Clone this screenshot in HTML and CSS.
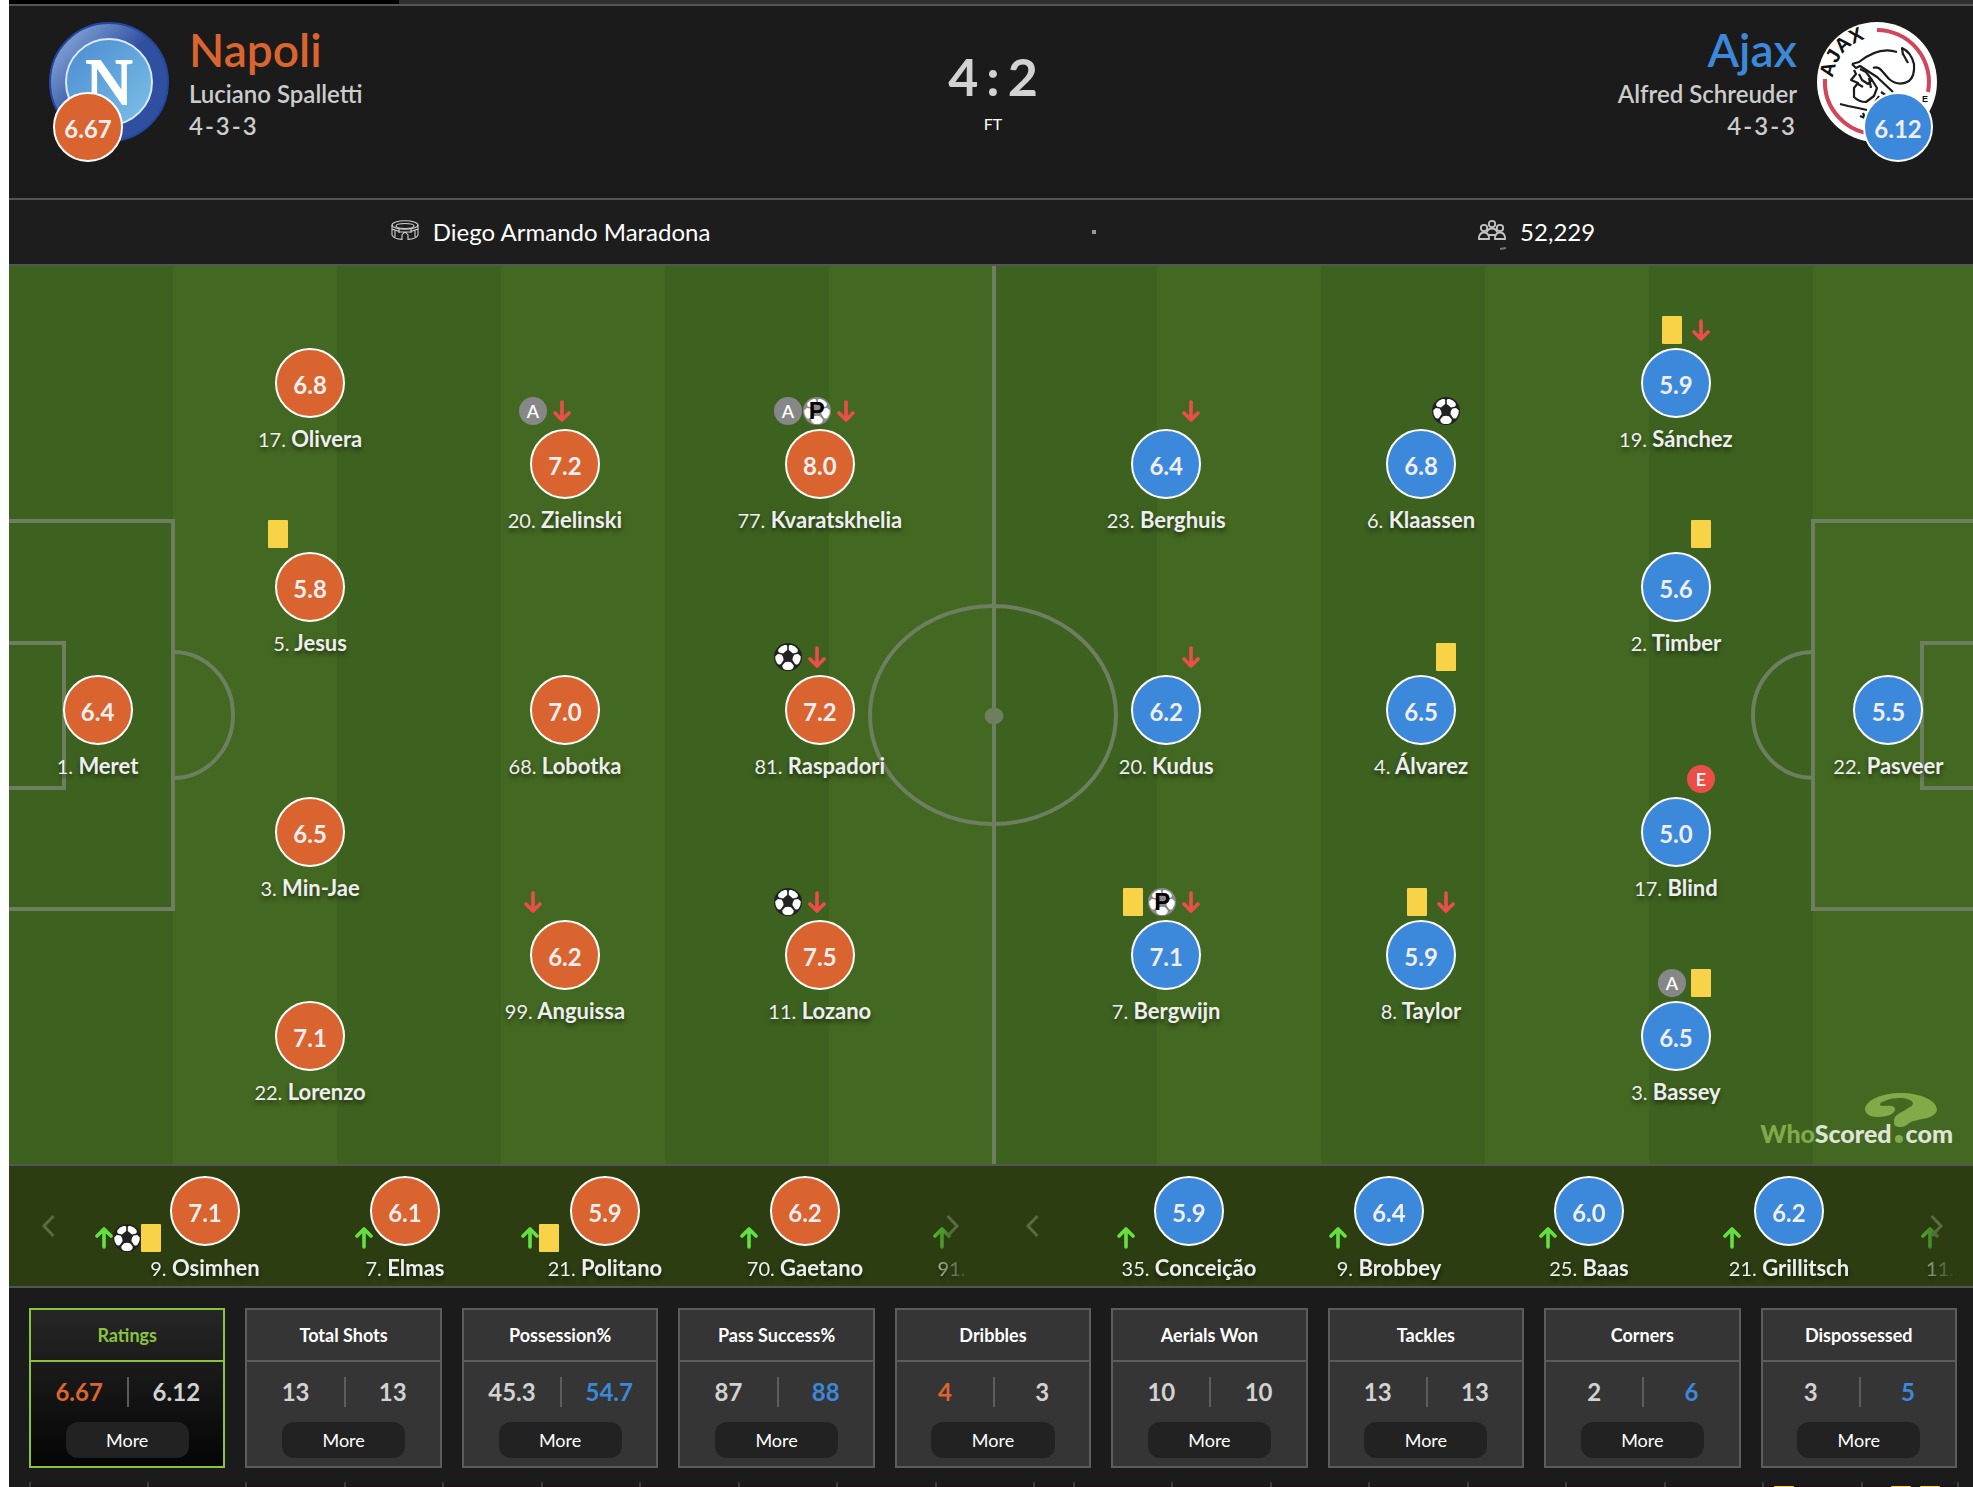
FILE: index.html
```html
<!DOCTYPE html>
<html lang="en">
<head>
    <meta charset="utf-8">
    <title>Napoli 4 : 2 Ajax</title>
    <link rel="stylesheet" href="styles.css">
</head>
<body>
    <!-- Shared icons -->
    <svg class="defs" width="0" height="0" aria-hidden="true">
        <symbol id="arrow" viewBox="0 0 18 22">
            <path d="M9 2V19M2 13L9 20L16 13" fill="none" stroke="currentColor" stroke-width="3.6" stroke-linecap="round" stroke-linejoin="round"/>
        </symbol>
        <symbol id="ball" viewBox="0 0 28 28">
            <circle cx="14" cy="14" r="14" fill="currentColor"/>
            <g fill="#fff">
                <path d="M4.500 6Q7 3 10.500 2Q13 1.500 13.200 3V7L9 10.500L5 9.500Q3.500 8 4.500 6Z"/>
                <path d="M23.500 6Q21 3 17.500 2Q15 1.500 14.800 3V7L19 10.500L23 9.500Q24.500 8 23.500 6Z"/>
                <path d="M3.800 11L7.500 11.500Q9.500 13.500 9.600 17L7 21Q4.500 22.500 3 20Q1 17 1.200 13.500Z"/>
                <path d="M24.200 11L20.500 11.500Q18.500 13.500 18.400 17L21 21Q23.500 22.500 25 20Q27 17 26.800 13.500Z"/>
                <path d="M11 19.200Q14 18.500 17 19.200L19.800 22.500Q20 25 17.500 26.500Q14 27.600 10.500 26.500Q8 25 8.200 22.500Z"/>
            </g>
        </symbol>
        <symbol id="chevron" viewBox="0 0 15 24">
            <path d="M12.500 2L3 12L12.500 22" fill="none" stroke="currentColor" stroke-width="3"/>
        </symbol>
    </svg>

    <main class="match">
        <div class="tabs"><div class="tab-active"></div></div>

        <!-- Score header -->
        <header class="header">
            <div class="team">
                <div class="crest">
                    <svg viewBox="0 0 120 120">
                        <defs>
                            <linearGradient id="shine" x1="0.1" y1="0.15" x2="0.5" y2="0.5">
                                <stop offset="0" stop-color="#7fa0d4"/>
                                <stop offset="1" stop-color="#2f4fa0"/>
                            </linearGradient>
                            <linearGradient id="sky" x1="0" y1="0" x2="1" y2="1">
                                <stop offset="0" stop-color="#4a8ad0"/>
                                <stop offset="1" stop-color="#7cc2e8"/>
                            </linearGradient>
                        </defs>
                        <circle cx="60" cy="60" r="59" fill="url(#shine)" stroke="#2746a0" stroke-width="2"/>
                        <circle cx="60" cy="60" r="43" fill="url(#sky)" stroke="#dce9fa" stroke-width="2"/>
                        <text x="60" y="82" text-anchor="middle" font-size="66" class="crest-n">N</text>
                    </svg>
                    <span class="rating home crest-rating">6.67</span>
                </div>
                <div class="team-info">
                    <h1 class="team-name home-text">Napoli</h1>
                    <p class="manager">Luciano Spalletti</p>
                    <p class="formation">4-3-3</p>
                </div>
            </div>
            <div class="result">
                <div class="score"><span>4</span><span>:</span><span>2</span></div>
                <div class="status">FT</div>
            </div>
            <div class="team team-right">
                <div class="crest">
                    <svg viewBox="0 0 120 120">
                        <circle cx="60" cy="60" r="60" fill="#fff"/>
                        <g fill="none" stroke="#d2455a" stroke-width="4">
                            <path d="M60 8A52 52 0 0 1 111 70"/>
                            <path d="M8 57A52 52 0 0 0 60 112"/>
                        </g>
                        <path id="ajaxArc" d="M16 56A44 44 0 0 1 74 18" fill="none"/>
                        <text class="crest-ajax" font-size="20"><textPath href="#ajaxArc">AJAX</textPath></text>
                        <g fill="none" stroke="#1b1b1b" stroke-width="2.200" stroke-linejoin="round">
                            <path d="M35 42L42 40Q62 24 80 30"/>
                            <path d="M35 42L39 46L43 44L60 55L76 70"/>
                            <path d="M86 33L85 26Q94 30 97 42Q98 54 92 59Q82 65 72 57L65 49Q61 44 56 46"/>
                            <path d="M86 32L91 41"/>
                            <path d="M37 48L39 52L34 58L41 61L37 66L37 75Q42 80 49 80L57 74L60 66L55 58L49 50L43 47"/>
                            <path d="M42 52L45 58L51 62L55 58M41 62L46 65M52 56L54 66"/>
                            <path d="M23 82L31 84L41 86L50 88M43 94L48 96L46 91M58 80L62 74M64 70L70 74"/>
                        </g>
                        <text x="105" y="80" font-size="9" class="crest-ajax">E</text>
                    </svg>
                    <span class="rating away crest-rating">6.12</span>
                </div>
                <div class="team-info">
                    <h1 class="team-name away-text">Ajax</h1>
                    <p class="manager">Alfred Schreuder</p>
                    <p class="formation">4-3-3</p>
                </div>
            </div>
        </header>

        <!-- Venue and attendance -->
        <div class="venue">
            <div class="venue-item">
                <svg class="venue-icon" viewBox="0 0 28 20" fill="none" stroke="#cfcfcf" stroke-width="1.100">
                    <ellipse cx="14" cy="5" rx="13" ry="4.300"/>
                    <ellipse cx="14" cy="6" rx="9" ry="2.500"/>
                    <path d="M1 5V15Q3 19 11 19.400V15Q14 10 17 15V19.400Q25 19 27 15V5M1 9Q14 15 27 9M4 10V17M8 8V13M20 8V13M24 10V17"/>
                </svg>
                <span>Diego Armando Maradona</span>
            </div>
            <i class="dot"></i>
            <div class="venue-item">
                <svg class="venue-icon" viewBox="0 0 28 20" fill="none" stroke="#c4c4c4" stroke-width="1.800">
                    <ellipse cx="14" cy="4" rx="3.200" ry="3.200"/>
                    <circle cx="6" cy="8" r="3.200"/>
                    <circle cx="22" cy="8" r="3.200"/>
                    <path d="M1 19V17Q2 12.500 6 12.500Q10 12.500 11 17V19ZM17 19V17Q18 12.500 22 12.500Q26 12.500 27 17V19ZM9 12Q10 8.500 14 8.500Q18 8.500 19 12M11 15H17"/>
                    <path d="M22 29L28 28" stroke="#777"/>
                </svg>
                <span>52,229</span>
            </div>
        </div>

        <!-- Pitch -->
        <section class="pitch">
            <svg class="lines" viewBox="0 0 1968 898" preserveAspectRatio="none" fill="none" stroke="#6e7e60" stroke-width="4">
                <path d="M0 255H164V643H0M0 377H55V522H0"/>
                <path d="M164 386A60 63 0 0 1 164 512"/>
                <path d="M1968 255H1804V643H1968M1968 377H1913V522H1968"/>
                <path d="M1804 386A60 63 0 0 0 1804 512"/>
                <path d="M985 0V898"/>
                <ellipse cx="984" cy="449" rx="123" ry="109"/>
                <ellipse cx="985" cy="450" rx="9" ry="8" fill="#6e7e60" stroke-width="1"/>
            </svg>

            <div class="side side-home">
                <div class="player col-1 row-4">
                    <span class="rating home">6.4</span>
                    <div class="name"><small>1.</small> Meret</div>
                </div>
                <div class="player col-2 row-1">
                    <span class="rating home">6.8</span>
                    <div class="name"><small>17.</small> Olivera</div>
                </div>
                <div class="player col-2 row-3">
                    <div class="events"><i class="event"><i class="yellow"></i></i></div>
                    <span class="rating home">5.8</span>
                    <div class="name"><small>5.</small> Jesus</div>
                </div>
                <div class="player col-2 row-5">
                    <span class="rating home">6.5</span>
                    <div class="name"><small>3.</small> Min-Jae</div>
                </div>
                <div class="player col-2 row-7">
                    <span class="rating home">7.1</span>
                    <div class="name"><small>22.</small> Lorenzo</div>
                </div>
                <div class="player col-3 row-2">
                    <div class="events">
                        <span class="event assist">A</span>
                        <i class="event"><svg class="off"><use href="#arrow"/></svg></i>
                    </div>
                    <span class="rating home">7.2</span>
                    <div class="name"><small>20.</small> Zielinski</div>
                </div>
                <div class="player col-3 row-4">
                    <span class="rating home">7.0</span>
                    <div class="name"><small>68.</small> Lobotka</div>
                </div>
                <div class="player col-3 row-6">
                    <div class="events"><i class="event"><svg class="off"><use href="#arrow"/></svg></i></div>
                    <span class="rating home">6.2</span>
                    <div class="name"><small>99.</small> Anguissa</div>
                </div>
                <div class="player col-4 row-2">
                    <div class="events">
                        <span class="event assist">A</span>
                        <span class="event penalty"><svg class="ball"><use href="#ball"/></svg><b>P</b></span>
                        <i class="event"><svg class="off"><use href="#arrow"/></svg></i>
                    </div>
                    <span class="rating home">8.0</span>
                    <div class="name"><small>77.</small> Kvaratskhelia</div>
                </div>
                <div class="player col-4 row-4">
                    <div class="events">
                        <i class="event"><svg class="ball"><use href="#ball"/></svg></i>
                        <i class="event"><svg class="off"><use href="#arrow"/></svg></i>
                    </div>
                    <span class="rating home">7.2</span>
                    <div class="name"><small>81.</small> Raspadori</div>
                </div>
                <div class="player col-4 row-6">
                    <div class="events">
                        <i class="event"><svg class="ball"><use href="#ball"/></svg></i>
                        <i class="event"><svg class="off"><use href="#arrow"/></svg></i>
                    </div>
                    <span class="rating home">7.5</span>
                    <div class="name"><small>11.</small> Lozano</div>
                </div>
            </div>

            <div class="side side-away">
                <div class="player col-4 row-2">
                    <div class="events"><i class="event"><svg class="off"><use href="#arrow"/></svg></i></div>
                    <span class="rating away">6.4</span>
                    <div class="name"><small>23.</small> Berghuis</div>
                </div>
                <div class="player col-4 row-4">
                    <div class="events"><i class="event"><svg class="off"><use href="#arrow"/></svg></i></div>
                    <span class="rating away">6.2</span>
                    <div class="name"><small>20.</small> Kudus</div>
                </div>
                <div class="player col-4 row-6">
                    <div class="events">
                        <i class="event"><i class="yellow"></i></i>
                        <span class="event penalty"><svg class="ball"><use href="#ball"/></svg><b>P</b></span>
                        <i class="event"><svg class="off"><use href="#arrow"/></svg></i>
                    </div>
                    <span class="rating away">7.1</span>
                    <div class="name"><small>7.</small> Bergwijn</div>
                </div>
                <div class="player col-3 row-2">
                    <div class="events"><i class="event"><svg class="ball"><use href="#ball"/></svg></i></div>
                    <span class="rating away">6.8</span>
                    <div class="name"><small>6.</small> Klaassen</div>
                </div>
                <div class="player col-3 row-4">
                    <div class="events"><i class="event"><i class="yellow"></i></i></div>
                    <span class="rating away">6.5</span>
                    <div class="name"><small>4.</small> Álvarez</div>
                </div>
                <div class="player col-3 row-6">
                    <div class="events">
                        <i class="event"><i class="yellow"></i></i>
                        <i class="event"><svg class="off"><use href="#arrow"/></svg></i>
                    </div>
                    <span class="rating away">5.9</span>
                    <div class="name"><small>8.</small> Taylor</div>
                </div>
                <div class="player col-2 row-1">
                    <div class="events">
                        <i class="event"><i class="yellow"></i></i>
                        <i class="event"><svg class="off"><use href="#arrow"/></svg></i>
                    </div>
                    <span class="rating away">5.9</span>
                    <div class="name"><small>19.</small> Sánchez</div>
                </div>
                <div class="player col-2 row-3">
                    <div class="events"><i class="event"><i class="yellow"></i></i></div>
                    <span class="rating away">5.6</span>
                    <div class="name"><small>2.</small> Timber</div>
                </div>
                <div class="player col-2 row-5">
                    <div class="events"><span class="event error">E</span></div>
                    <span class="rating away">5.0</span>
                    <div class="name"><small>17.</small> Blind</div>
                </div>
                <div class="player col-2 row-7">
                    <div class="events">
                        <span class="event assist">A</span>
                        <i class="event"><i class="yellow"></i></i>
                    </div>
                    <span class="rating away">6.5</span>
                    <div class="name"><small>3.</small> Bassey</div>
                </div>
                <div class="player col-1 row-4">
                    <span class="rating away">5.5</span>
                    <div class="name"><small>22.</small> Pasveer</div>
                </div>
            </div>

            <div class="logo">
                <svg class="logo-mark" viewBox="0 0 72 34">
                    <path d="M12 24C4 24 0 20 0 16C1 7 17 0 35 0C57 0 72 8 72 17C71 22 65 25 57 26L49 28C43 29 42 34 36 34C30 34 29 32 29 29C29 25 30 23 32 22C35 19 40 18 43 15C46 14 48 12 48 10C47 7 41 5 35 5C28 5 23 6 20 8C16 9 15 10 15 12C17 14 20 12 22 13C27 12 30 14 30 16C30 20 25 24 12 24Z" fill="#81ab49"/>
                </svg>
                <span class="logo-green">Who</span>Scored<i class="logo-dot"></i>com
            </div>
        </section>

        <!-- Substitutes -->
        <section class="subs">
            <div class="bench">
                <button class="arrow-btn prev" aria-label="Previous"><svg><use href="#chevron"/></svg></button>
                <div class="bench-list">
                    <div class="slot"><div class="sub">
                        <div class="events">
                            <svg class="on"><use href="#arrow"/></svg>
                            <svg class="ball"><use href="#ball"/></svg>
                            <i class="yellow"></i>
                        </div>
                        <span class="rating home">7.1</span>
                        <div class="name"><small>9.</small> Osimhen</div>
                    </div></div>
                    <div class="slot"><div class="sub">
                        <div class="events"><svg class="on"><use href="#arrow"/></svg></div>
                        <span class="rating home">6.1</span>
                        <div class="name"><small>7.</small> Elmas</div>
                    </div></div>
                    <div class="slot"><div class="sub">
                        <div class="events"><svg class="on"><use href="#arrow"/></svg><i class="yellow"></i></div>
                        <span class="rating home">5.9</span>
                        <div class="name"><small>21.</small> Politano</div>
                    </div></div>
                    <div class="slot"><div class="sub">
                        <div class="events"><svg class="on"><use href="#arrow"/></svg></div>
                        <span class="rating home">6.2</span>
                        <div class="name"><small>70.</small> Gaetano</div>
                    </div></div>
                    <div class="slot"><div class="sub">
                        <div class="events"><svg class="on"><use href="#arrow"/></svg></div>
                        <div class="rating-gap"></div>
                        <div class="name"><small>91.</small> Ndombélé</div>
                    </div></div>
                </div>
                <button class="arrow-btn next" aria-label="Next"><svg><use href="#chevron"/></svg></button>
            </div>
            <div class="bench">
                <button class="arrow-btn prev" aria-label="Previous"><svg><use href="#chevron"/></svg></button>
                <div class="bench-list">
                    <div class="slot"><div class="sub">
                        <div class="events"><svg class="on"><use href="#arrow"/></svg></div>
                        <span class="rating away">5.9</span>
                        <div class="name"><small>35.</small> Conceição</div>
                    </div></div>
                    <div class="slot"><div class="sub">
                        <div class="events"><svg class="on"><use href="#arrow"/></svg></div>
                        <span class="rating away">6.4</span>
                        <div class="name"><small>9.</small> Brobbey</div>
                    </div></div>
                    <div class="slot"><div class="sub">
                        <div class="events"><svg class="on"><use href="#arrow"/></svg></div>
                        <span class="rating away">6.0</span>
                        <div class="name"><small>25.</small> Baas</div>
                    </div></div>
                    <div class="slot"><div class="sub">
                        <div class="events"><svg class="on"><use href="#arrow"/></svg></div>
                        <span class="rating away">6.2</span>
                        <div class="name"><small>21.</small> Grillitsch</div>
                    </div></div>
                    <div class="slot"><div class="sub">
                        <div class="events"><svg class="on"><use href="#arrow"/></svg></div>
                        <div class="rating-gap"></div>
                        <div class="name"><small>11.</small> Ocampos</div>
                    </div></div>
                </div>
                <button class="arrow-btn next" aria-label="Next"><svg><use href="#chevron"/></svg></button>
            </div>
        </section>

        <!-- Match stats -->
        <section class="stats">
            <div class="stat active">
                <h2>Ratings</h2>
                <div class="values"><span class="home-text">6.67</span><span>6.12</span></div>
                <button class="more">More</button>
            </div>
            <div class="stat">
                <h2>Total Shots</h2>
                <div class="values"><span>13</span><span>13</span></div>
                <button class="more">More</button>
            </div>
            <div class="stat">
                <h2>Possession%</h2>
                <div class="values"><span>45.3</span><span class="away-text">54.7</span></div>
                <button class="more">More</button>
            </div>
            <div class="stat">
                <h2>Pass Success%</h2>
                <div class="values"><span>87</span><span class="away-text">88</span></div>
                <button class="more">More</button>
            </div>
            <div class="stat">
                <h2>Dribbles</h2>
                <div class="values"><span class="home-text">4</span><span>3</span></div>
                <button class="more">More</button>
            </div>
            <div class="stat">
                <h2>Aerials Won</h2>
                <div class="values"><span>10</span><span>10</span></div>
                <button class="more">More</button>
            </div>
            <div class="stat">
                <h2>Tackles</h2>
                <div class="values"><span>13</span><span>13</span></div>
                <button class="more">More</button>
            </div>
            <div class="stat">
                <h2>Corners</h2>
                <div class="values"><span>2</span><span class="away-text">6</span></div>
                <button class="more">More</button>
            </div>
            <div class="stat">
                <h2>Dispossessed</h2>
                <div class="values"><span>3</span><span class="away-text">5</span></div>
                <button class="more">More</button>
            </div>
        </section>

        <!-- Timeline -->
        <div class="timeline">
            <i></i><i></i><i></i><i></i><i></i><i></i><i></i><i></i><i></i><i></i>
            <i class="extra"></i>
            <i></i><i></i><i></i><i></i><i></i><i></i><i></i>
            <i><b class="yellow"></b></i>
            <i><b class="yellow"></b><b class="yellow"></b></i>
        </div>
    </main>
</body>
</html>
```
FILE: styles.css
```css
* {
    box-sizing: border-box;
}

body {
    margin: 0;
    height: 100vh;
    overflow: hidden;
    background: #fff;
    font-family: Lato, "Open Sans", sans-serif;
    color: #fff;
}

h1, h2, p {
    margin: 0;
}

.defs {
    position: absolute;
}

.match {
    margin-left: 9px;
    margin-right: -4px;
    background: #1b1b1b;
}

.home-text {
    color: #db6530;
}

.away-text {
    color: #3c88da;
}

.tabs {
    height: 6px;
    background: #2f2f2f;
    border-bottom: 2px solid #555;
}

.tab-active {
    width: 390px;
    height: 4px;
    background: #000;
}

/* header */
.header {
    display: grid;
    grid-template-columns: 1fr auto 1fr;
    height: 194px;
    padding: 16px 40px 0;
    border-bottom: 2px solid #555;
}

.team {
    display: flex;
    align-items: flex-start;
    gap: 20px;
}

.team-right {
    flex-direction: row-reverse;
    text-align: right;
}

.crest {
    position: relative;
    width: 120px;
    height: 120px;
}

.crest svg {
    display: block;
}

.crest-n {
    font-family: "Liberation Serif", serif;
    fill: #fff;
    stroke: #fff;
    stroke-width: 2px;
}

.crest-ajax {
    font-family: "Liberation Sans", sans-serif;
    font-weight: bold;
    fill: #111;
}

.crest-rating {
    position: absolute;
    top: 70px;
    left: 4px;
}

.team-right .crest-rating {
    left: auto;
    right: 4px;
}

.team-name {
    font-size: 46px;
    font-weight: 600;
    line-height: 56px;
}

.manager, .formation {
    font-size: 24px;
    font-weight: 600;
    line-height: 32px;
    color: #ccc;
}

.formation {
    letter-spacing: 2px;
}

.result {
    padding-top: 24px;
    text-align: center;
}

.score {
    display: flex;
    justify-content: center;
    gap: 8px;
    font-size: 52px;
    font-weight: 700;
    line-height: 60px;
    color: #d2d2d2;
}

.status {
    font-size: 16px;
    line-height: 36px;
}

/* venue */
.venue {
    display: flex;
    justify-content: space-evenly;
    align-items: center;
    height: 66px;
    background: #1d1d1d;
    border-bottom: 2px solid #555;
}

.venue-item {
    display: flex;
    align-items: center;
    gap: 14px;
    font-size: 24px;
    line-height: 28px;
}

.venue-icon {
    width: 28px;
    height: 20px;
    margin-bottom: 4px;
    overflow: visible;
}

.dot {
    width: 4px;
    height: 4px;
    background: #999;
}

/* pitch */
.pitch {
    position: relative;
    display: grid;
    grid-template-columns: 1fr 1fr;
    aspect-ratio: 1968 / 898;
    background: repeating-linear-gradient(to right, #3d611f 0 8.3333%, #436821 8.3333% 16.6667%);
}

.lines {
    position: absolute;
    width: 100%;
    height: 100%;
}

.side {
    position: relative;
}

.player {
    position: absolute;
    width: 240px;
    margin: -35px -120px 0;
}

.side-home .col-1 { left: 9%; }
.side-home .col-2 { left: 30.6%; }
.side-home .col-3 { left: 56.5%; }
.side-home .col-4 { left: 82.4%; }

.side-away .col-1 { right: 9%; }
.side-away .col-2 { right: 30.6%; }
.side-away .col-3 { right: 56.5%; }
.side-away .col-4 { right: 82.4%; }

.row-1 { top: 13%; }
.row-2 { top: 22.1%; }
.row-3 { top: 35.7%; }
.row-4 { top: 49.4%; }
.row-5 { top: 63%; }
.row-6 { top: 76.7%; }
.row-7 { top: 85.7%; }

.rating {
    display: block;
    width: 70px;
    height: 70px;
    margin: 0 auto;
    border: 2px solid #fff;
    border-radius: 50%;
    font-size: 24px;
    font-weight: 700;
    line-height: 70px;
    text-align: center;
    color: #eee;
}

.rating.home {
    background: #da642f;
}

.rating.away {
    background: #3c88da;
}

.name {
    margin-top: 8px;
    font-size: 22px;
    font-weight: 700;
    line-height: 26px;
    text-align: center;
    white-space: nowrap;
    color: #eee;
    text-shadow: 0 3px 4px rgba(0, 0, 0, 0.5);
}

.name small {
    font-size: 20px;
    font-weight: 400;
}

.events {
    position: absolute;
    display: flex;
}

.player .events {
    top: -32px;
    gap: 1px;
}

.side-home .events {
    left: 74px;
}

.side-away .events {
    right: 81px;
}

.event {
    position: relative;
    display: flex;
    justify-content: center;
    align-items: center;
    width: 28px;
    height: 28px;
    border-radius: 50%;
    font-size: 18px;
    font-weight: 600;
}

.assist {
    background: #878787;
}

.error {
    background: #eb4e48;
}

.yellow {
    display: block;
    width: 20px;
    height: 28px;
    border-radius: 1px;
    background: #f8d347;
}

.off {
    width: 18px;
    height: 22px;
    color: #eb4e48;
}

.on {
    width: 18px;
    height: 22px;
    color: #64e043;
    transform: rotate(180deg);
}

.ball {
    width: 28px;
    height: 28px;
    color: #222;
}

.penalty .ball {
    color: #8a8a8a;
}

.penalty b {
    position: absolute;
    font-family: "Liberation Sans", sans-serif;
    font-size: 24px;
    line-height: 28px;
    color: #000;
}

.logo {
    position: absolute;
    right: 24px;
    bottom: 14px;
    font-size: 25px;
    font-weight: 900;
    line-height: 34px;
    color: #dfe5d6;
}

.logo-green {
    color: #81ab49;
}

.logo-dot {
    display: inline-block;
    width: 8px;
    height: 8px;
    margin: 0 3px;
    border-radius: 50%;
    background: #81ab49;
}

.logo-mark {
    position: absolute;
    right: 16px;
    top: -23px;
    width: 72px;
    height: 34px;
}

/* substitutes */
.subs {
    display: grid;
    grid-template-columns: 1fr 1fr;
    height: 124px;
    background: #2b3d11;
    border-top: 2px solid #555;
    border-bottom: 2px solid #555;
}

.bench {
    position: relative;
    min-width: 0;
}

.bench-list {
    display: flex;
    height: 120px;
    padding: 10px 0 0 96px;
    overflow: hidden;
    -webkit-mask-image: linear-gradient(to right, #000 calc(100% - 75px), transparent calc(100% - 20px));
    mask-image: linear-gradient(to right, #000 calc(100% - 75px), transparent calc(100% - 20px));
}

.slot {
    flex: 0 0 200px;
    display: flex;
    justify-content: center;
}

.sub {
    position: relative;
}

.sub .name {
    margin-top: 9px;
}

.sub .events {
    right: 90%;
    top: 48px;
    align-items: center;
    height: 28px;
}

.sub .events > * {
    flex-shrink: 0;
}

.rating-gap {
    height: 70px;
}

.arrow-btn {
    position: absolute;
    z-index: 1;
    top: 44px;
    width: 30px;
    height: 32px;
    padding: 0;
    border: none;
    background: none;
    color: #5a6b43;
    cursor: pointer;
}

.arrow-btn svg {
    display: block;
    width: 15px;
    height: 24px;
    margin: 0 auto;
}

.prev {
    left: 24px;
}

.next {
    right: 25px;
    transform: scaleX(-1);
}

/* stats */
.stats {
    display: grid;
    grid-template-columns: repeat(9, 1fr);
    gap: 20px;
    padding: 20px 20px 14px;
}

.stat {
    height: 160px;
    border: 2px solid #5c5c5c;
    background: #353535;
    text-align: center;
}

.stat h2 {
    height: 52px;
    border-bottom: 2px solid #5c5c5c;
    font-size: 18px;
    font-weight: 700;
    line-height: 50px;
}

.values {
    display: grid;
    grid-template-columns: 1fr 1fr;
    height: 30px;
    margin: 15px 0;
    font-size: 24px;
    font-weight: 700;
    line-height: 30px;
    color: #d2d2d2;
}

.values .home-text {
    color: #db6530;
}

.values span + span {
    border-left: 2px solid #5c5c5c;
}

.values .away-text {
    color: #3c88da;
}

.more {
    display: block;
    width: 64%;
    height: 36px;
    margin: 0 auto;
    padding: 0;
    border: none;
    border-radius: 12px;
    background: #222;
    font-family: inherit;
    font-size: 18px;
    color: #fff;
    cursor: pointer;
}

.active {
    border-color: #8ac43f;
    background: linear-gradient(#262626, #050505);
}

.active h2 {
    border-color: #8ac43f;
    color: #8ac43f;
}

/* timeline */
.timeline {
    display: grid;
    grid-template-columns: 118px repeat(9, 1fr) 40px repeat(9, 1fr);
    height: 20px;
    margin: 0 18px 0 20px;
    background: linear-gradient(#1b1b1b 4px, #1a1014 4px);
}

.timeline i {
    display: flex;
    gap: 9px;
    padding: 4px 0 0 10px;
    border-left: 2px solid #3c3c3c;
}

.timeline i:last-child {
    padding-left: 28px;
    border-right: 2px solid #3c3c3c;
}

.timeline .extra {
    padding: 0;
}
```
